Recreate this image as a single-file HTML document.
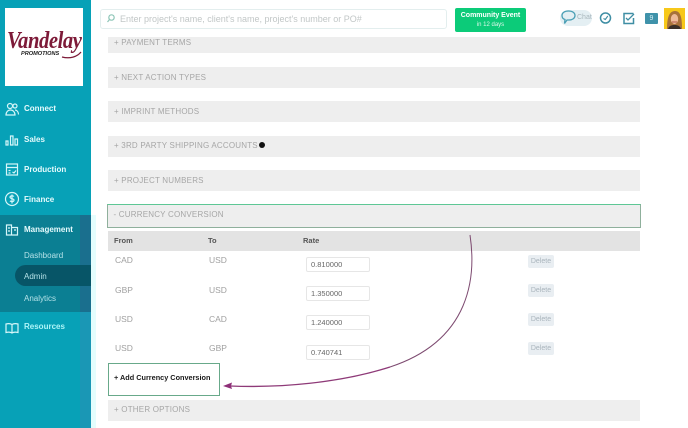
<!DOCTYPE html>
<html><head><meta charset="utf-8">
<style>
html,body{margin:0;padding:0;background:#fff;}
body{width:688px;height:428px;position:relative;overflow:hidden;font-family:"Liberation Sans",sans-serif;}
.a{position:absolute;}
.side{left:0;top:0;width:91px;height:428px;background:#07a1b7;}
.nav{position:absolute;left:24px;color:#e6fbfd;font-size:8px;font-weight:bold;white-space:nowrap;line-height:10px;}
.sub{position:absolute;left:24px;color:#b5e2e8;font-size:8px;white-space:nowrap;line-height:10px;}
.bar{position:absolute;left:108px;width:532px;background:#eeeeee;color:#a6a6a6;font-size:8px;letter-spacing:.2px;line-height:10px;box-sizing:border-box;padding-left:6px;white-space:nowrap;}
.cell{position:absolute;color:#a0a0a0;font-size:8.5px;line-height:11px;}
.inp{position:absolute;left:306px;width:64px;height:15px;border:1px solid #e6e6e6;border-radius:2px;box-sizing:border-box;font-size:7.5px;line-height:13px;color:#666;padding-left:4px;background:#fff;}
.del{position:absolute;left:528px;width:26px;height:13px;background:#e9eef2;border-radius:2px;color:#a9b4bc;font-size:7px;line-height:14px;text-align:center;}
.th{position:absolute;top:236px;font-size:7.5px;font-weight:bold;color:#555;line-height:10px;}
</style></head>
<body>
<div class="a side"></div>
<div class="a" style="left:0;top:215px;width:91px;height:97px;background:#0b7f93;"></div>
<div class="a" style="left:80px;top:215px;width:11px;height:97px;background:#1a6f8e;"></div>
<div class="a" style="left:80px;top:312px;width:11px;height:116px;background:#1a97b5;"></div>
<div class="a" style="left:15px;top:265px;width:76px;height:21px;background:#075567;border-radius:11px 0 0 11px;"></div>
<div class="a" style="left:91px;top:215px;width:5px;height:213px;background:#e4fdfd;"></div>

<div class="a" style="left:5px;top:8px;width:78px;height:78px;background:#fff;"></div>
<div class="a" style="left:7px;top:27px;font-family:'Liberation Serif',serif;font-style:italic;font-weight:bold;font-size:24px;line-height:28px;letter-spacing:-.5px;color:#7d1a38;transform:scaleX(.86);transform-origin:left top;white-space:nowrap;">Vandelay</div>
<svg class="a" style="left:0;top:0" width="91" height="90" fill="none"><path d="M62 57C70 59 77 57 81 52" stroke="#7d1a38" stroke-width="1.300"/></svg>
<div class="a" style="left:21px;top:51px;font-style:italic;font-weight:bold;font-size:5.600px;line-height:7px;color:#222;white-space:nowrap;">PROMOTIONS</div>
<svg class="a" style="left:0;top:0" width="91" height="428" fill="none" stroke="#d6f6f9" stroke-width="1.2">
<circle cx="10" cy="106" r="2.5"/><circle cx="15" cy="106" r="2"/><path d="M6 115c0-3 2-5 4.500-5s4.500 2 4.500 5zM15 110c2 0 3.500 2 3.500 4.500"/>
<path d="M6 145v-4h2v4zM10.500 145v-9h2.500v9zM15 145v-6h2.500v6z"/>
<rect x="6.500" y="164" width="11" height="11"/><path d="M6.500 167.500h11M8.500 170.500h2M8.500 173h2M12.500 172l1.500 1 2-2.500"/>
<circle cx="12" cy="199" r="6.500"/><path d="M14 196.500c-1-1-4-1-4 .8s4 1 4 2.800-3 1.800-4 .7M12 194.500v9"/>
<path d="M6.500 235v-10h5v10zM11.500 235v-7.500h6v7.500zM8 228h2M8 231h2M14 230h2"/>
<path d="M12 324.500c-1.500-1-4-1-6-.5v8.500c2-.5 4.500-.5 6 .5 1.500-1 4-1 6-.5V324c-2-.5-4.500-.5-6 .5zM12 324.500v8.500"/>
</svg>
<div class="nav" style="top:104px;">Connect</div>
<div class="nav" style="top:135px;">Sales</div>
<div class="nav" style="top:165px;">Production</div>
<div class="nav" style="top:195px;">Finance</div>
<div class="nav" style="top:225px;">Management</div>
<div class="sub" style="top:251px;">Dashboard</div>
<div class="sub" style="top:272px;">Admin</div>
<div class="sub" style="top:294px;">Analytics</div>
<div class="nav" style="top:322px;color:#aef5f8;">Resources</div>

<!-- search -->
<div class="a" style="left:100px;top:9px;width:347px;height:20px;border:1px solid #e3eeee;border-radius:3px;box-sizing:border-box;"></div>
<svg class="a" style="left:106px;top:13px" width="10" height="11" fill="none" stroke="#8fc6b8" stroke-width="1.200"><circle cx="5.500" cy="4.500" r="2.700"/><path d="M3.500 6.500L1.500 9"/></svg>
<div class="a" style="left:120px;top:13px;font-size:9px;line-height:12px;color:#c2c7c7;white-space:nowrap;">Enter project's name, client's name, project's number or PO#</div>

<!-- event -->
<div class="a" style="left:455px;top:8px;width:71px;height:24px;background:#0ccb79;border-radius:2px;color:#fff;text-align:center;">
<div style="font-size:7px;font-weight:bold;line-height:9px;margin-top:3px;">Community Event</div>
<div style="font-size:6px;line-height:8px;margin-top:1px;color:#dcf8ea;">in 12 days</div>
</div>

<!-- top icons -->
<div class="a" style="left:560px;top:10px;width:32px;height:16px;background:#e4eff3;border-radius:8px;"></div>
<svg class="a" style="left:560px;top:9px" width="18" height="18" fill="none" stroke="#4a9fb5" stroke-width="1.300"><path d="M8.500 2c4 0 6.500 1.800 6.500 4.500S12.500 11 9 11H7L4.500 14.500 5 10.500C3 10 2 8.300 2 6.500 2 3.800 4.500 2 8.500 2z"/></svg>
<div class="a" style="left:577px;top:13px;font-size:7px;line-height:9px;color:#a8b6bc;">Chat</div>
<svg class="a" style="left:598px;top:10px" width="40" height="16" fill="none" stroke="#3f8ea4" stroke-width="1.500">
<circle cx="7.500" cy="8" r="5"/><path d="M5.500 8.500l1.800 1 2.500-3.500" stroke-width="1.100"/>
<path d="M35.500 3.500H26v10h9.500V8"/><path d="M28 8l2 2 6-6" stroke-width="1.300"/>
</svg>
<div class="a" style="left:645px;top:13px;width:13px;height:11px;background:#3f92aa;border-radius:1px;color:#d6eef3;font-size:7px;line-height:11px;text-align:center;">9</div>
<svg class="a" style="left:664px;top:8px" width="21" height="21"><rect width="21" height="21" fill="#f7c81a"/><path d="M3 21C3 10 5 3 11 3s7 8 7 18z" fill="#a8723a"/><ellipse cx="10.500" cy="11" rx="3.700" ry="5" fill="#eebb99"/><path d="M8 14h5" stroke="#a03e38" stroke-width=".8"/><path d="M4 21c1-3 3-4 6.500-4s5.500 1 6.500 4z" fill="#3a2f28"/></svg>

<!-- bars -->
<div class="bar" style="top:37px;height:16px;line-height:11px;">+ PAYMENT TERMS</div>
<div class="bar" style="top:67px;height:21px;line-height:21px;">+ NEXT ACTION TYPES</div>
<div class="bar" style="top:101px;height:21px;line-height:21px;">+ IMPRINT METHODS</div>
<div class="bar" style="top:136px;height:21px;line-height:19px;">+ 3RD PARTY SHIPPING ACCOUNTS</div>
<div class="a" style="left:259px;top:142px;width:6px;height:6px;border-radius:50%;background:#111;"></div>
<div class="bar" style="top:170px;height:21px;line-height:21px;">+ PROJECT NUMBERS</div>
<div class="bar" style="left:107px;top:204px;width:534px;height:24px;line-height:20px;border:1.500px solid #5ec795;border-bottom-color:#8fb09c;border-left-color:#8fb09c;border-right-color:#8fb09c;padding-left:5.500px;">- CURRENCY CONVERSION</div>
<div class="a" style="left:108px;top:231px;width:532px;height:20px;background:#e3e3e3;"></div>
<div class="th" style="left:114px;">From</div>
<div class="th" style="left:208px;">To</div>
<div class="th" style="left:303px;">Rate</div>

<div class="cell" style="left:115px;top:255px;">CAD</div><div class="cell" style="left:209px;top:255px;">USD</div>
<div class="cell" style="left:115px;top:285px;">GBP</div><div class="cell" style="left:209px;top:285px;">USD</div>
<div class="cell" style="left:115px;top:314px;">USD</div><div class="cell" style="left:209px;top:314px;">CAD</div>
<div class="cell" style="left:115px;top:343px;">USD</div><div class="cell" style="left:209px;top:343px;">GBP</div>

<div class="inp" style="top:257px;">0.810000</div>
<div class="inp" style="top:286px;">1.350000</div>
<div class="inp" style="top:315px;">1.240000</div>
<div class="inp" style="top:345px;">0.740741</div>
<div class="del" style="top:255px;">Delete</div>
<div class="del" style="top:284px;">Delete</div>
<div class="del" style="top:313px;">Delete</div>
<div class="del" style="top:342px;">Delete</div>

<div class="a" style="left:108px;top:363px;width:112px;height:33px;border:1.300px solid #68a98a;box-sizing:border-box;background:#fff;font-size:7.300px;font-weight:bold;line-height:28px;color:#1a1a1a;padding-left:5px;white-space:nowrap;">+ Add Currency Conversion</div>
<div class="bar" style="top:400px;height:21px;line-height:19px;">+ OTHER OPTIONS</div>

<svg class="a" style="left:0;top:0" width="688" height="428" fill="none">
<path d="M470 235C476 275 472 340 390 367" stroke="#7d4a70" stroke-width="1"/>
<path d="M390 367C340 383 280 388 230 386" stroke="#8e3a78" stroke-width="1.300"/>
<path d="M223 386L232 382.500L231 386L232 389z" fill="#8e2f78"/>
</svg>
</body></html>
